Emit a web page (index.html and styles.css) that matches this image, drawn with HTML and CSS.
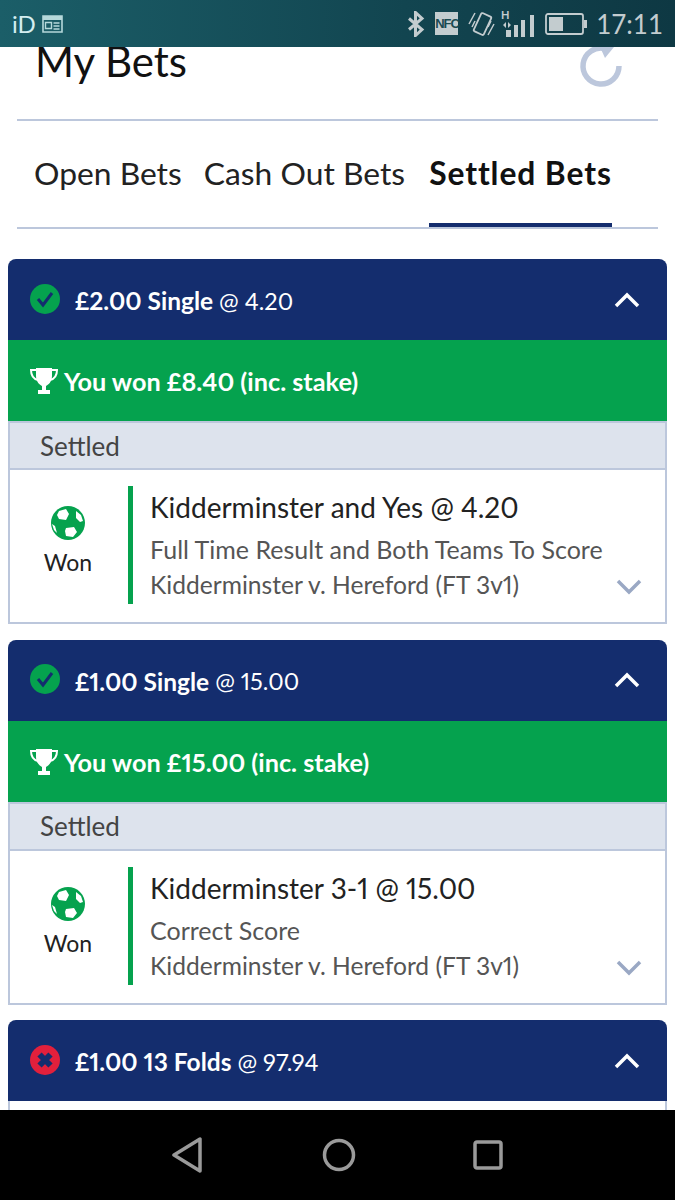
FILE: index.html
```html
<!DOCTYPE html>
<html lang="en">
<head>
    <meta charset="UTF-8">
    <title>My Bets</title>
    <link rel="stylesheet" href="styles.css">
</head>
<body>
    <div class="status-bar">
        <div class="status-left">
            <span class="carrier">iD</span>
            <svg class="status-news" width="21" height="18" viewBox="0 0 21 18">
                <path d="M1 1h19v16H1z" fill="none" stroke="#b5d8da" stroke-width="1.6"/>
                <path d="M1 1h19v4H1z" fill="#b5d8da"/>
                <path d="M3.500 7.500h6v6h-6z" fill="none" stroke="#b5d8da" stroke-width="1.400"/>
                <path d="M11.500 8h6M11.500 11h6M11.500 14h6" stroke="#b5d8da" stroke-width="1.500"/>
            </svg>
        </div>
        <div class="status-right">
            <svg width="18" height="26" viewBox="0 0 18 26">
                <path d="M2 7.500l13 11-6.500 6V1.500l6.500 6-13 11" fill="none" stroke="#c3cccf" stroke-width="3"/>
            </svg>
            <span class="nfc">NFC</span>
            <svg class="vibrate" width="27" height="26" viewBox="0 0 27 26">
                <rect x="9" y="3" width="11" height="20" rx="1.500" transform="rotate(25 14.500 13)" fill="none" stroke="#c3cccf" stroke-width="1.800"/>
                <path d="M1 13l6-11M4 16l3-6M26 13l-6 11M23 10l-3 6" stroke="#c3cccf" stroke-width="1.500"/>
            </svg>
            <svg width="34" height="34" viewBox="0 0 34 34">
                <text x="0" y="12" class="net">H</text>
                <path d="M5 15l-3 3 3 3zM7 15l3 3-3 3z" fill="#c3cccf"/>
                <path d="M5 23h5v7H5zM13 18h4v12h-4zM20 13h4v17h-4zM29 8h4v22h-4z" fill="#c3cccf"/>
            </svg>
            <svg width="43" height="22" viewBox="0 0 43 22">
                <rect x="1" y="1" width="37" height="20" rx="2" fill="none" stroke="#c3cccf" stroke-width="1.800"/>
                <rect x="4" y="4" width="14" height="14" fill="#c3cccf"/>
                <rect x="39" y="7" width="3" height="8" fill="#c3cccf"/>
            </svg>
            <span class="clock">17:11</span>
        </div>
    </div>

    <div class="screen">
        <div class="page-head">
            <h1>My Bets</h1>
            <svg class="refresh" width="46" height="46" viewBox="0 0 46 46">
                <path d="M27 5.500A18 18 0 1 0 41 23" fill="none" stroke="#bcc7dc" stroke-width="5.500"/>
                <path d="M22 4h14l-9 11z" fill="#bcc7dc"/>
            </svg>
        </div>

        <div class="tabs">
            <div class="tab">Open Bets</div>
            <div class="tab">Cash Out Bets</div>
            <div class="tab active">Settled Bets</div>
        </div>

        <div class="bet-list">
            <div class="bet">
                <div class="bet-head">
                    <svg class="bet-status" width="30" height="30" viewBox="0 0 30 30">
                        <circle cx="15" cy="15" r="15" fill="#05a24e"/>
                        <path d="M8 15l5 6 9-12" fill="none" stroke="#142d6e" stroke-width="3"/>
                    </svg>
                    <span class="stake">£2.00 Single</span>
                    <span class="odds">@ 4.20</span>
                    <svg class="chevron" width="26" height="16" viewBox="0 0 26 16">
                        <path d="M2 14L13 3l11 11" fill="none" stroke="#fff" stroke-width="3.500"/>
                    </svg>
                </div>
                <div class="bet-win">
                    <svg class="trophy" width="28" height="28" viewBox="0 0 28 28">
                        <path d="M6 1h16v8c0 6-4 9-6 10v4h4v4H8v-4h4v-4C10 18 6 15 6 9z" fill="#fff"/>
                        <path d="M6 3H1c0 6 3 9 7 10M22 3h5c0 6-3 9-7 10" fill="none" stroke="#fff" stroke-width="2"/>
                    </svg>
                    You won £8.40 (inc. stake)
                </div>
                <div class="bet-state">Settled</div>
                <div class="bet-body">
                    <div class="result">
                        <svg class="ball" width="34" height="34" viewBox="0 0 34 34">
                            <circle cx="17" cy="17" r="17" fill="#05a24e"/>
                            <path d="M8 5l7-2 3 5-3 6-7-1-2-4zM25 5l5 4 2 6-3 1-4-4zM15 22l8-1 3 5-4 5-7-1-1-5zM1 18l3 2 2 7-3-3z" fill="#fff"/>
                        </svg>
                        <span>Won</span>
                    </div>
                    <div class="selection">
                        <div class="pick">Kidderminster and Yes @ 4.20</div>
                        <div class="market">Full Time Result and Both Teams To Score</div>
                        <div class="event">Kidderminster v. Hereford (FT 3v1)</div>
                    </div>
                    <svg class="expand" width="26" height="16" viewBox="0 0 26 16">
                        <path d="M2 2l11 11L24 2" fill="none" stroke="#9aa8c4" stroke-width="3.500"/>
                    </svg>
                </div>
            </div>

            <div class="bet">
                <div class="bet-head">
                    <svg class="bet-status" width="30" height="30" viewBox="0 0 30 30">
                        <circle cx="15" cy="15" r="15" fill="#05a24e"/>
                        <path d="M8 15l5 6 9-12" fill="none" stroke="#142d6e" stroke-width="3"/>
                    </svg>
                    <span class="stake">£1.00 Single</span>
                    <span class="odds">@ 15.00</span>
                    <svg class="chevron" width="26" height="16" viewBox="0 0 26 16">
                        <path d="M2 14L13 3l11 11" fill="none" stroke="#fff" stroke-width="3.500"/>
                    </svg>
                </div>
                <div class="bet-win">
                    <svg class="trophy" width="28" height="28" viewBox="0 0 28 28">
                        <path d="M6 1h16v8c0 6-4 9-6 10v4h4v4H8v-4h4v-4C10 18 6 15 6 9z" fill="#fff"/>
                        <path d="M6 3H1c0 6 3 9 7 10M22 3h5c0 6-3 9-7 10" fill="none" stroke="#fff" stroke-width="2"/>
                    </svg>
                    You won £15.00 (inc. stake)
                </div>
                <div class="bet-state">Settled</div>
                <div class="bet-body">
                    <div class="result">
                        <svg class="ball" width="34" height="34" viewBox="0 0 34 34">
                            <circle cx="17" cy="17" r="17" fill="#05a24e"/>
                            <path d="M8 5l7-2 3 5-3 6-7-1-2-4zM25 5l5 4 2 6-3 1-4-4zM15 22l8-1 3 5-4 5-7-1-1-5zM1 18l3 2 2 7-3-3z" fill="#fff"/>
                        </svg>
                        <span>Won</span>
                    </div>
                    <div class="selection">
                        <div class="pick">Kidderminster 3-1 @ 15.00</div>
                        <div class="market">Correct Score</div>
                        <div class="event">Kidderminster v. Hereford (FT 3v1)</div>
                    </div>
                    <svg class="expand" width="26" height="16" viewBox="0 0 26 16">
                        <path d="M2 2l11 11L24 2" fill="none" stroke="#9aa8c4" stroke-width="3.500"/>
                    </svg>
                </div>
            </div>

            <div class="bet">
                <div class="bet-head">
                    <svg class="bet-status" width="30" height="30" viewBox="0 0 30 30">
                        <circle cx="15" cy="15" r="15" fill="#e2203c"/>
                        <path d="M9.500 9.500l11 11M20.500 9.500l-11 11" fill="none" stroke="#142d6e" stroke-width="6"/>
                    </svg>
                    <span class="stake">£1.00 13 Folds</span>
                    <span class="odds">@ 97.94</span>
                    <svg class="chevron" width="26" height="16" viewBox="0 0 26 16">
                        <path d="M2 14L13 3l11 11" fill="none" stroke="#fff" stroke-width="3.500"/>
                    </svg>
                </div>
                <div class="bet-body"></div>
            </div>
        </div>
    </div>

    <div class="nav-bar">
        <svg width="34" height="36" viewBox="0 0 34 36">
            <path d="M29 2v32L3 18z" fill="none" stroke="#9a9a9a" stroke-width="3.500" stroke-linejoin="round"/>
        </svg>
        <svg width="34" height="34" viewBox="0 0 34 34">
            <circle cx="17" cy="17" r="14.500" fill="none" stroke="#9a9a9a" stroke-width="3.500"/>
        </svg>
        <svg width="30" height="30" viewBox="0 0 30 30">
            <rect x="2" y="2" width="26" height="26" rx="2" fill="none" stroke="#9a9a9a" stroke-width="3.500"/>
        </svg>
    </div>
</body>
</html>
```

FILE: styles.css
```css
* {
    margin: 0;
    padding: 0;
    box-sizing: border-box;
}

body {
    width: 675px;
    height: 1200px;
    display: flex;
    flex-direction: column;
    overflow: hidden;
    font-family: "Lato", sans-serif;
    font-variant-numeric: proportional-nums;
    background: #fff;
    color: #1c1c1c;
}

/* status and nav bars sit over the scrolled page */
.status-bar {
    height: 47px;
    flex-shrink: 0;
    position: relative;
    z-index: 1;
    display: flex;
    justify-content: space-between;
    align-items: center;
    padding: 0 12px;
    background: linear-gradient(90deg, #1b5e68 0%, #124550 60%, #0e3843 100%);
}

.status-left,
.status-right {
    display: flex;
    align-items: center;
}

.status-left {
    gap: 6px;
}

.status-right {
    gap: 10px;
}

.carrier {
    font-size: 24px;
    color: #d4eef0;
}

.nfc {
    width: 23px;
    height: 23px;
    background: #c3cccf;
    color: #1a4a52;
    font-family: "Liberation Sans Narrow", "Liberation Sans", sans-serif;
    font-size: 13px;
    font-weight: 700;
    line-height: 23px;
    text-align: center;
    letter-spacing: -1px;
}

.vibrate {
    margin-right: -4px;
}

.net {
    font-size: 11px;
    font-weight: 700;
    fill: #c3cccf;
}

.clock {
    margin-left: -2px;
    font-size: 26px;
    font-variant-numeric: tabular-nums;
    color: #c3cccf;
}

.screen {
    flex: 1;
    min-height: 0;
}

.page-head {
    height: 74px;
    margin: 0 17px;
    display: flex;
    justify-content: space-between;
    align-items: flex-start;
    padding: 0 34px 0 18px;
    border-bottom: 2px solid #bcc7dc;
}

.page-head h1 {
    margin-top: -1px;
    font-size: 42px;
    font-weight: 400;
    line-height: 30px;
    color: #111;
}

.refresh {
    margin-top: -4px;
}

.tabs {
    height: 108px;
    margin: 0 17px;
    padding-left: 17px;
    display: flex;
    gap: 22px;
    border-bottom: 2px solid #bcc7dc;
}

.tab {
    display: flex;
    align-items: center;
    padding-bottom: 2px;
    font-size: 31.8px;
    color: #222;
}

.tab.active {
    margin-left: 2px;
    padding: 2px 0 0;
    font-weight: 700;
    letter-spacing: 0.9px;
    color: #111;
    border-bottom: 4px solid #142d6e;
}

.bet-list {
    padding: 30px 8px 0;
    display: flex;
    flex-direction: column;
    gap: 15.5px;
}

.bet-head {
    height: 81px;
    display: flex;
    align-items: center;
    padding: 0 27px 0 22px;
    background: #142d6e;
    border-radius: 8px 8px 0 0;
    color: #fff;
    font-size: 24.5px;
}

.bet-status {
    margin: -2px 15px 0 0;
}

.stake,
.odds {
    padding-top: 2px;
}

.stake {
    font-weight: 700;
    margin-right: 6px;
}

.odds {
    font-size: 23.5px;
}

.chevron {
    margin-left: auto;
}

.bet-win {
    height: 81px;
    display: flex;
    align-items: center;
    gap: 6px;
    padding: 1px 0 0 22px;
    background: #05a24e;
    color: #fff;
    font-size: 25.25px;
    font-weight: 700;
}

.bet-state {
    height: 49px;
    display: flex;
    align-items: center;
    padding-left: 30px;
    background: #dde3ed;
    border: 2px solid #bcc7dc;
    font-size: 26px;
    color: #444;
}

.bet-body {
    height: 154px;
    display: flex;
    align-items: flex-start;
    position: relative;
    border: 2px solid #bcc7dc;
    border-top: 0;
}

.result {
    width: 116px;
    padding-top: 36px;
    display: flex;
    flex-direction: column;
    align-items: center;
    gap: 8px;
    font-size: 23px;
    line-height: 28px;
    color: #222;
}

.selection {
    height: 118px;
    flex: 1;
    margin: 16px 0 0 2px;
    padding: 2px 0 0 17px;
    border-left: 5px solid #05a24e;
}

.pick {
    font-size: 28px;
    line-height: 38px;
    margin-bottom: 5px;
    color: #222;
}

.market,
.event {
    font-size: 25px;
    line-height: 36px;
    color: #555;
}

.event {
    font-size: 24.6px;
}

.expand {
    position: absolute;
    right: 23px;
    bottom: 27px;
}

.nav-bar {
    height: 90px;
    flex-shrink: 0;
    position: relative;
    z-index: 1;
    display: flex;
    justify-content: center;
    align-items: center;
    gap: 117px;
    padding-right: 2px;
    background: #000;
}
```
